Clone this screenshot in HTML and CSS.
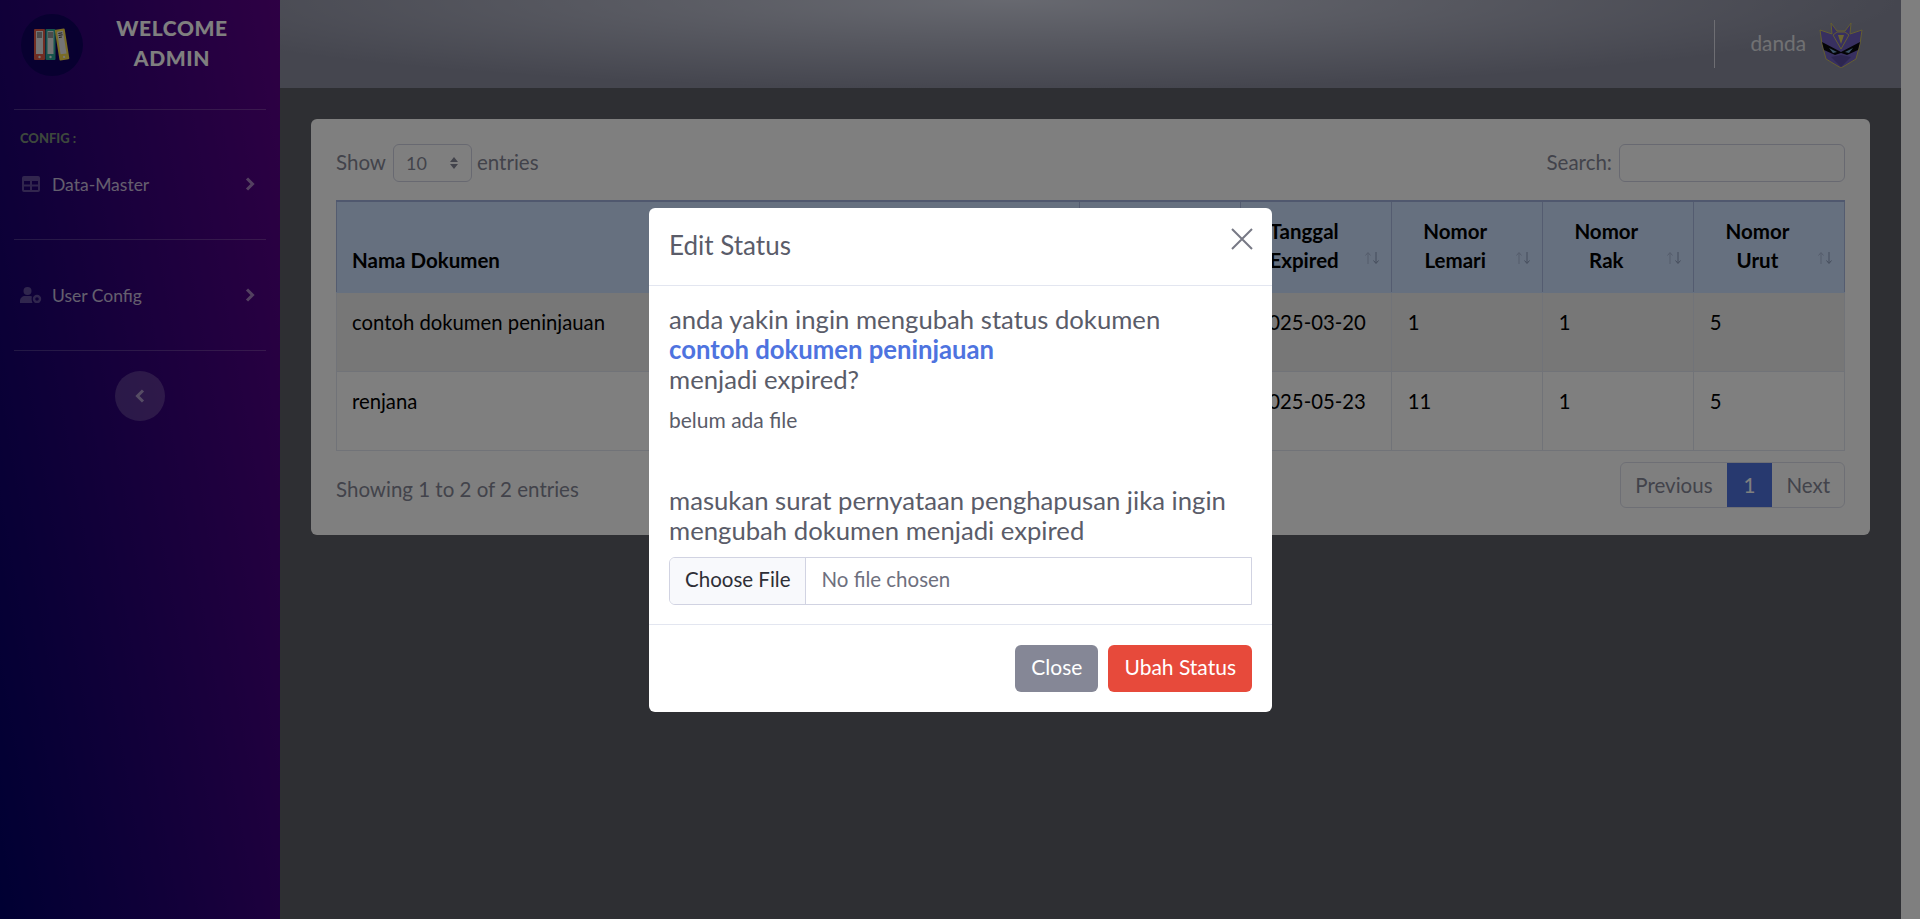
FILE: index.html
```html
<!DOCTYPE html>
<html lang="en">
<head>
    <meta charset="UTF-8">
    <title>Dokumen</title>
    <link rel="stylesheet" href="styles.css">
</head>
<body>
    <div class="wrapper">
        <aside class="sidebar">
            <div class="brand">
                <div class="brand-logo">
                    <svg viewBox="0 0 62 62" width="62" height="62">
                        <circle cx="31" cy="31" r="31" fill="#100060"/>
                        <rect x="13" y="15" width="11" height="31" rx="1" fill="#e05a47"/>
                        <rect x="15" y="17" width="7" height="23" fill="#e8e8e8"/>
                        <circle cx="18.500" cy="43" r="1.200" fill="#eee"/>
                        <rect x="24.500" y="15" width="10" height="31" rx="1" fill="#2fa89a"/>
                        <rect x="26.500" y="17" width="6" height="23" fill="#e8e8e8"/>
                        <circle cx="29.500" cy="43" r="1.200" fill="#eee"/>
                        <g transform="rotate(-9 41 30)">
                            <rect x="36" y="15" width="10" height="31" rx="1" fill="#f4d84a"/>
                            <rect x="38" y="17" width="6" height="23" fill="#e8e8e8"/>
                            <circle cx="41" cy="43" r="1.200" fill="#eee"/>
                            <path d="M39 19h4M39 21h4M39 23h3" stroke="#444" stroke-width="1"/>
                        </g>
                        <path d="M16 19h5M16 21h5M16 23h5M27 19h5M27 21h5M27 23h5" stroke="#444" stroke-width="1"/>
                    </svg>
                </div>
                <div class="brand-text">WELCOME<br>ADMIN</div>
            </div>
            <hr class="side-line">
            <div class="side-head">CONFIG :</div>
            <a class="side-item">
                <svg class="side-icon" viewBox="0 0 18 16" width="18" height="16"><path fill="currentColor" d="M2 0h14a2 2 0 0 1 2 2v12a2 2 0 0 1-2 2H2a2 2 0 0 1-2-2V2a2 2 0 0 1 2-2zm0 5v3.500h6V5zm8 0v3.500h6V5zM2 10.500V14h6v-3.500zm8 0V14h6v-3.500z"/></svg>
                <span>Data-Master</span>
                <svg class="side-arrow" viewBox="0 0 10 14" width="10" height="14"><path d="M2 1.500L7.500 7 2 12.500" fill="none" stroke="currentColor" stroke-width="3"/></svg>
            </a>
            <hr class="side-line">
            <a class="side-item second">
                <svg class="side-icon wide" viewBox="0 0 22 16" width="22" height="16"><circle cx="7.500" cy="4" r="4" fill="currentColor"/><path fill="currentColor" d="M0 16v-2c0-3 2.500-5 5-5h5c1 0 1.500.2 2 .5-1 2 0 5 .5 6.500z"/><circle cx="17" cy="12" r="3" fill="none" stroke="currentColor" stroke-width="2.400"/></svg>
                <span>User Config</span>
                <svg class="side-arrow" viewBox="0 0 10 14" width="10" height="14"><path d="M2 1.500L7.500 7 2 12.500" fill="none" stroke="currentColor" stroke-width="3"/></svg>
            </a>
            <hr class="side-line">
            <div class="side-toggle">
                <button class="toggle-btn"><svg viewBox="0 0 10 14" width="10" height="14"><path d="M8 1.500L2.500 7 8 12.500" fill="none" stroke="currentColor" stroke-width="3"/></svg></button>
            </div>
        </aside>
        <div class="content">
            <header class="topbar">
                <div class="top-line"></div>
                <span class="top-user">danda</span>
                <svg class="top-avatar" viewBox="0 0 44 46" width="44" height="46">
                    <path d="M1 8L13 12 12 1 18 9H26L32 1 31 12 43 8 41 22 37 37 22 46 7 37 3 22z" fill="#7060c0" stroke="#c8bc60" stroke-width="1"/>
                    <path d="M14 13L22 27 30 13 26 10H18z" fill="#7060c0" stroke="#c8bc60" stroke-width="1"/>
                    <path d="M19 13h6l-3 9z" fill="#d8c860"/>
                    <path d="M3 20L22 30 41 20 39 28 28 33 22 31 16 33 5 28z" fill="#08080c"/>
                    <path d="M10 26L18 30 14 31zM34 26L26 30 30 31z" fill="#7aa8d0"/>
                    <path d="M22 33L32 35 22 45 12 35z" fill="#5a4ca0"/>
                </svg>
            </header>
            <main class="main">
                <div class="card">
                    <div class="table-tools">
                        <label class="tool-show">Show <span class="fake-select">10<svg viewBox="0 0 10 14" width="10" height="14"><path d="M5 1l4 5H1zM5 13L1 8h8z" fill="currentColor"/></svg></span> entries</label>
                        <label class="tool-search">Search: <span class="fake-input"></span></label>
                    </div>
                    <table class="doc-table">
                        <thead>
                            <tr>
                                <th class="col-name left">Nama Dokumen</th>
                                <th class="col-b"></th>
                                <th class="col-c">Tanggal<br>Expired<svg class="sort" viewBox="0 0 16 14" width="16" height="14"><path d="M4 13V2M1.500 4.500L4 1.500 6.500 4.500" stroke="#a9b8d6" fill="none"/><path d="M12 1v11M9.500 9.500L12 12.500 14.500 9.500" stroke="#8a9ab8" fill="none"/></svg></th>
                                <th class="col-d">Nomor<br>Lemari<svg class="sort" viewBox="0 0 16 14" width="16" height="14"><path d="M4 13V2M1.500 4.500L4 1.500 6.500 4.500" stroke="#a9b8d6" fill="none"/><path d="M12 1v11M9.500 9.500L12 12.500 14.500 9.500" stroke="#8a9ab8" fill="none"/></svg></th>
                                <th class="col-d">Nomor<br>Rak<svg class="sort" viewBox="0 0 16 14" width="16" height="14"><path d="M4 13V2M1.500 4.500L4 1.500 6.500 4.500" stroke="#a9b8d6" fill="none"/><path d="M12 1v11M9.500 9.500L12 12.500 14.500 9.500" stroke="#8a9ab8" fill="none"/></svg></th>
                                <th class="col-d">Nomor<br>Urut<svg class="sort" viewBox="0 0 16 14" width="16" height="14"><path d="M4 13V2M1.500 4.500L4 1.500 6.500 4.500" stroke="#a9b8d6" fill="none"/><path d="M12 1v11M9.500 9.500L12 12.500 14.500 9.500" stroke="#8a9ab8" fill="none"/></svg></th>
                            </tr>
                        </thead>
                        <tbody>
                            <tr class="odd">
                                <td class="first">contoh dokumen peninjauan</td><td></td><td>2025-03-20</td><td>1</td><td>1</td><td>5</td>
                            </tr>
                            <tr>
                                <td class="first">renjana</td><td></td><td>2025-05-23</td><td>11</td><td>1</td><td>5</td>
                            </tr>
                        </tbody>
                    </table>
                    <div class="table-foot">
                        <span class="foot-info">Showing 1 to 2 of 2 entries</span>
                        <div class="pager"><a>Previous</a><a class="on">1</a><a>Next</a></div>
                    </div>
                </div>
            </main>
        </div>
        <div class="right-strip"></div>
    </div>

    <div class="backdrop"></div>
    <div class="modal">
        <div class="modal-head">
            <h5>Edit Status</h5>
            <span class="modal-x">
                <svg viewBox="0 0 22 22" width="22" height="22"><path d="M1 1l20 20M21 1L1 21" stroke="currentColor" stroke-width="2" fill="none"/></svg>
            </span>
        </div>
        <div class="modal-body">
            <p class="big">anda yakin ingin mengubah status dokumen<br><b>contoh dokumen peninjauan</b><br>menjadi expired?</p>
            <p class="small">belum ada file</p>
            <p class="big note">masukan surat pernyataan penghapusan jika ingin mengubah dokumen menjadi expired</p>
            <div class="file-box"><span class="file-btn">Choose File</span><span class="file-name">No file chosen</span></div>
        </div>
        <div class="modal-foot">
            <button class="btn grey">Close</button>
            <button class="btn red">Ubah Status</button>
        </div>
    </div>
</body>
</html>
```
FILE: styles.css
```css
* { margin: 0; padding: 0; box-sizing: border-box; }
html, body { height: 100%; overflow: hidden; }
body { font-family: "Lato", "Noto Sans", sans-serif; font-size: 20.500px; color: #858796; background: #fff; }
.wrapper { display: flex; height: 919px; }

.sidebar { width: 280px; flex: none; background: linear-gradient(80deg, #000066, #5c0088); color: #fff; padding: 0 14px; }
.brand { display: flex; height: 88px; padding-top: 14px; margin-bottom: 21px; }
.brand-logo { width: 62px; height: 62px; margin-left: 7px; flex: none; }
.brand-text { flex: 1; text-align: center; font-weight: 900; font-size: 21px; line-height: 30px; letter-spacing: .6px; margin: -1px 5px 0 0; color: #fff; }
.side-line { border: 0; border-top: 1px solid rgba(255,255,255,.2); }
.side-head { font-size: 13px; font-weight: 900; color: #7a9078; padding: 20px 6px 0; line-height: 16px; }
.side-item { display: flex; align-items: center; height: 56px; padding: 0 11px 0 8px; color: rgba(255,255,255,.75); font-size: 17.500px; margin-top: 10px; margin-bottom: 27px; }
.side-item.second { margin-top: 27px; }
.side-item span { flex: 1; }
.side-icon { margin-right: 12px; flex: none; color: rgba(255,255,255,.3); }
.side-icon.wide { margin-left: -2px; margin-right: 10px; }
.side-arrow { flex: none; color: rgba(255,255,255,.5); }
.side-toggle { display: flex; justify-content: center; padding-top: 20px; }
.toggle-btn { width: 50px; height: 50px; border: 0; border-radius: 50%; background: rgba(255,255,255,.2); color: rgba(255,255,255,.5); display: flex; align-items: center; justify-content: center; }

.content { flex: 1; min-width: 0; display: flex; flex-direction: column; background: #5d5f66; }
.topbar { height: 88px; flex: none; background: radial-gradient(ellipse 900px 90px at 45% 0, #cfd2e0, #8a8c9e); display: flex; align-items: center; justify-content: flex-end; padding-right: 38px; }
.top-line { width: 1px; height: 48px; background: #dcdce6; margin-right: 35px; }
.top-user { font-size: 20.800px; color: #fff; opacity: .75; margin: -3px 13px 0 0; }
.top-avatar { margin-top: 1px; }
.main { padding: 31px 31px 0; }
.card { background: #fff; border-radius: 6px; padding: 25px 25px 27px; }
.table-tools { display: flex; justify-content: space-between; align-items: center; height: 38px; }
.tool-show, .tool-search { display: flex; align-items: flex-start; line-height: 36px; }
.fake-select { display: flex; align-items: center; justify-content: space-between; width: 79px; height: 38px; margin: 0 5px 0 7px; padding: 0 12px 0 12px; border: 1px solid #d1d3e2; border-radius: 6px; font-size: 18px; }
.fake-input { display: block; width: 226px; height: 38px; margin-left: 7px; border: 1px solid #d1d3e2; border-radius: 6px; }

.doc-table { width: 100%; border-collapse: collapse; table-layout: fixed; margin-top: 18px; color: #000; border: 1px solid #e3e6f0; }
.doc-table th { background: #cce0ff; height: 91px; font-weight: 700; border: 1px solid #a8b8e0; border-top: 2px solid #a0b0dc; border-bottom-color: #cce0ff; position: relative; line-height: 29px; text-align: center; vertical-align: bottom; padding: 0 36px 17px 13px; }
.doc-table th.left { text-align: left; padding-left: 15px; }
.col-name { width: 743px; }
.col-b { width: 160px; }
.col-c { width: 151px; }
.col-d { width: 151px; }
.sort { position: absolute; right: 11px; bottom: 27px; }
.doc-table td { height: 79px; padding: 15px 16px 0; vertical-align: top; line-height: 29px; font-size: 20.300px; border: 1px solid #e3e6f0; }
.doc-table td.first { padding-left: 15px; }
.doc-table tr.odd td { background: #eeeeee; }
.table-foot { display: flex; justify-content: space-between; margin-top: 11px; }
.foot-info { padding-top: 9px; line-height: 37px; }
.pager { display: flex; height: 46px; border: 1px solid #dddfeb; border-radius: 6px; overflow: hidden; }
.pager a { display: flex; align-items: center; padding: 0 14px; color: #858796; }
.pager a.on { padding: 0 17px; background: #4e73df; color: #fff; }
.right-strip { width: 19px; flex: none; }

.backdrop { position: fixed; inset: 0; background: rgba(0,0,0,.5); }
.modal { position: fixed; left: 649px; top: 208px; width: 623px; background: #fff; border-radius: 6px; color: #5a5c69; }
.modal-head { display: flex; justify-content: space-between; height: 78px; padding: 20px 19px 20px 20px; border-bottom: 1px solid #e3e6f0; }
.modal-head h5 { font-size: 26px; font-weight: 400; line-height: 34px; color: #5a5c69; }
.modal-x { color: #777985; display: block; height: 22px; }
.modal-body { padding: 19px 20px 19px; }
.big { font-size: 25.700px; line-height: 29.760px; }
.big b { color: #4e73df; font-weight: 700; }
.small { font-size: 21px; margin-top: 12px; line-height: 28px; }
.note { margin-top: 52px; }
.file-box { display: flex; height: 48px; margin-top: 11px; border: 1px solid #d1d3e2; border-radius: 6px 0 0 6px; overflow: hidden; font-size: 20.500px; }
.file-btn { display: flex; align-items: center; padding: 0 15px 3px; background: #f8f9fc; color: #2e2f37; border-right: 1px solid #d1d3e2; }
.file-name { display: flex; align-items: center; padding: 0 15px 3px; color: #6e707e; }
.modal-foot { display: flex; justify-content: flex-end; gap: 10px; height: 88px; padding: 20px; border-top: 1px solid #e3e6f0; }
.btn { height: 47px; padding: 0 16px 3px; border: 0; border-radius: 6px; color: #fff; font-family: inherit; font-size: 21px; }
.btn.grey { background: #858796; }
.btn.red { background: #e74a3b; }
```
